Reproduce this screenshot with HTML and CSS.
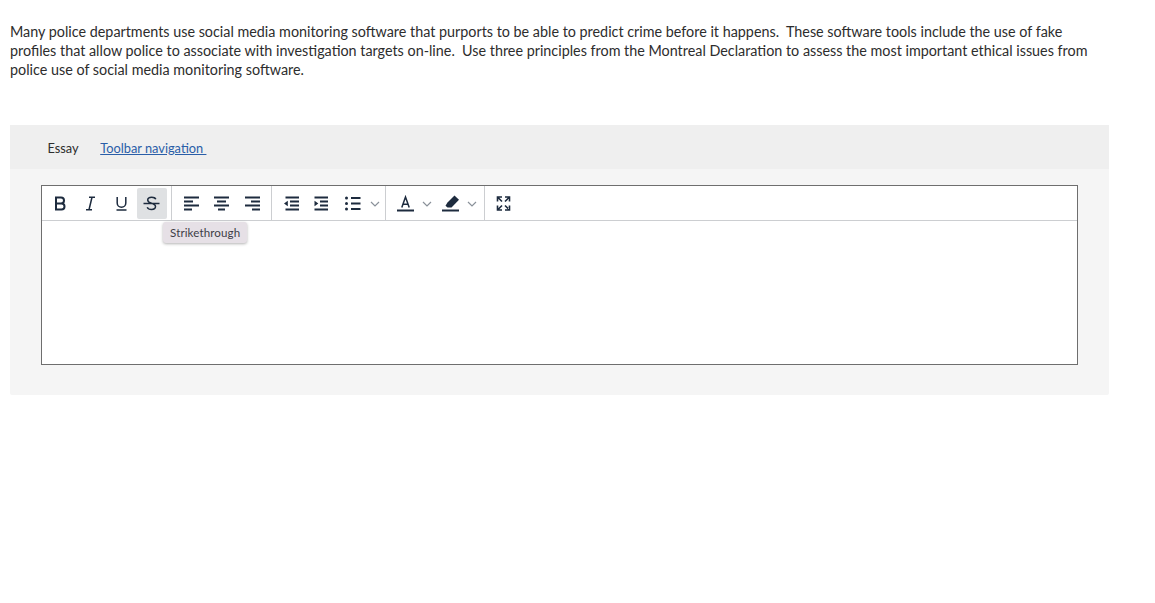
FILE: index.html
```html
<!DOCTYPE html>
<html lang="en">
<head>
<meta charset="utf-8">
<title>Essay</title>
<link rel="stylesheet" href="styles.css">
</head>
<body>
<p class="prompt">Many police departments use social media monitoring software that purports to be able to predict crime before it happens.&nbsp; These software tools include the use of fake profiles that allow police to associate with investigation targets on-line.&nbsp; Use three principles from the Montreal Declaration to assess the most important ethical issues from police use of social media monitoring software.</p>
<section class="card">
  <header class="card-head">
    <span class="label">Essay</span>
    <a class="nav-link" href="#">Toolbar navigation </a>
  </header>
  <div class="card-body">
    <div class="editor">
      <div class="toolbar">
        <div class="group group-text">
          <button class="tool"><svg viewBox="0 0 17 17" class="ico"><path d="M4 2.500h5a3 3 0 0 1 0 6H4zM4 8.500h5.500a3 3 0 0 1 0 6H4z" class="s2"/></svg></button>
          <button class="tool"><svg viewBox="0 0 17 17" class="ico"><path d="M7 2.300h6M4 14.700h6M10 2.300 7 14.700" class="s15"/></svg></button>
          <button class="tool"><svg viewBox="0 0 17 17" class="ico"><path d="M4.200 2v6a4.300 4.300 0 0 0 8.600 0V2M3.500 15h10" class="s15"/></svg></button>
          <button class="tool active"><svg viewBox="0 0 17 17" class="ico"><path d="M12.800 4.200C12.200 2.900 10.600 2.200 8.700 2.200c-2.200 0-4 1-4 2.900 0 1.500 1.300 2.500 3.800 3.200 2.500.7 4 1.600 4 3.300 0 1.900-1.800 2.900-4 2.900-2 0-3.600-.8-4.300-2.300M.5 8.500h16" class="s15"/></svg></button>
        </div>
        <div class="group group-align">
          <button class="tool"><svg viewBox="0 0 17 17" class="ico"><path d="M1 2.500h15M1 6.500h9M1 10.500h15M1 14.500h8" class="s18"/></svg></button>
          <button class="tool"><svg viewBox="0 0 17 17" class="ico"><path d="M1 2.500h15M4 6.500h9M1 10.500h15M5 14.500h7" class="s18"/></svg></button>
          <button class="tool"><svg viewBox="0 0 17 17" class="ico"><path d="M1 2.500h15M7 6.500h9M1 10.500h15M8 14.500h8" class="s18"/></svg></button>
        </div>
        <div class="group group-list">
          <button class="tool"><svg viewBox="0 0 17 17" class="ico"><path d="M2.500 2.500H16M7 6.500h9M7 10.500h9M2.500 14.500H16" class="s18"/><path d="M4.800 5.800 1 8.500l3.800 2.700z" class="fill"/></svg></button>
          <button class="tool"><svg viewBox="0 0 17 17" class="ico"><path d="M1.500 2.500H15M1.500 14.500H15M7 6.500h8M7 10.500h8" class="s18"/><path d="M1.500 5.800 5.300 8.500l-3.800 2.700z" class="fill"/></svg></button>
          <button class="tool"><svg viewBox="0 0 17 17" class="ico"><circle cx="2.500" cy="3" r="1.500" class="fill"/><circle cx="2.500" cy="8.500" r="1.500" class="fill"/><circle cx="2.500" cy="14" r="1.500" class="fill"/><path d="M7 3h9.500M7 8.500h9.500M7 14h9.500" class="s18"/></svg></button>
          <svg viewBox="0 0 10 6" class="chev"><path d="M1 1l4 4 4-4"/></svg>
        </div>
        <div class="group group-color">
          <button class="tool"><svg viewBox="0 0 17 17" class="ico"><path d="M4.800 12.500 8.500 2l3.700 10.500M6 9.300h5" class="s15"/><path d="M0 15.500h17" class="s2"/></svg></button>
          <svg viewBox="0 0 10 6" class="chev"><path d="M1 1l4 4 4-4"/></svg>
          <button class="tool tool-pen"><svg viewBox="0 0 17 17" class="ico"><path d="M12.500.5 17 4.800 9.500 12.500H5.500L3.500 10.800 5.500 7.500z" class="fill"/><path d="M0 15.500h17" class="s2"/></svg></button>
          <svg viewBox="0 0 10 6" class="chev"><path d="M1 1l4 4 4-4"/></svg>
        </div>
        <div class="group group-full">
          <button class="tool"><svg viewBox="0 0 17 17" class="ico"><path d="M2.500 6.500V2h4.500M2.500 2l4.500 4.500M14.500 6.500V2H10M14.500 2 10 6.500M2.500 10.500V15H7M2.500 15 7 10.500M14.500 10.500V15H10M14.500 15 10 10.500" class="s16"/></svg></button>
        </div>
        <div class="tooltip">Strikethrough</div>
      </div>
      <div class="editor-area"></div>
    </div>
  </div>
</section>
</body>
</html>
```
FILE: styles.css
```css
* { box-sizing: border-box; }
html, body { margin: 0; padding: 0; background: #fff; }
body {
  padding: 22px 46px 0 10px;
  font-family: Lato, "Open Sans", "Liberation Sans", sans-serif;
  color: #2d2d2d;
}
.prompt {
  margin: 0 0 46px;
  font-size: 14.35px;
  line-height: 19px;
  max-width: 1090px;
}
.card { width: 1099px; background: #f5f5f5; border-radius: 2px; padding-bottom: 30px; }
.card-head {
  height: 44px;
  background: #efefef;
  display: flex;
  align-items: center;
  padding: 1px 0 0 37.500px;
  gap: 21.500px;
  font-size: 12.800px;
}
.label { color: #2d2d2d; }
.nav-link { color: #2a5ea8; text-decoration: underline; white-space: pre; }
.card-body { padding: 16px 31px 0; }
.editor { border: 1px solid #6e6e6e; background: #fff; height: 180px; }
.toolbar {
  position: relative;
  height: 35px;
  display: flex;
  border-bottom: 1px solid #ccced1;
}
.group {
  display: flex;
  align-items: center;
  height: 100%;
  border-right: 1px solid #ccced1;
  padding-top: 1px;
}
.group-text { width: 130px; padding-left: 3px; }
.group-align { width: 100px; padding-left: 4px; }
.group-list { width: 114px; padding-left: 4px; }
.group-color { width: 99px; padding-left: 7px; }
.group-full { border-right: 0; padding-left: 6.500px; }
.tool {
  width: 30.500px;
  height: 31px;
  margin: 0;
  padding: 0;
  border: 0;
  border-radius: 2px;
  background: transparent;
  display: flex;
  align-items: center;
  justify-content: center;
}
.group-color .tool, .group-full .tool { width: 24px; }
.group-color .tool-pen { margin-left: 6px; }
.active { background: #dfe1e3; }
.ico { width: 17px; height: 17px; display: block; }
.s15, .s16, .s18, .s2 { fill: none; stroke: #1d2b3e; }
.s15 { stroke-width: 1.500; }
.s16 { stroke-width: 1.600; }
.s18 { stroke-width: 1.800; }
.s2 { stroke-width: 2; }
.fill { fill: #1d2b3e; }
.chev { width: 10px; height: 6px; fill: none; stroke: #8a919a; stroke-width: 1.200; margin-left: 2px; }
.group-color .chev { margin-left: 5px; }
.tooltip {
  position: absolute;
  left: 121px;
  top: 36px;
  height: 21px;
  padding: 0 7px 1px;
  display: flex;
  align-items: center;
  background: #e6e0e6;
  border-radius: 3px;
  box-shadow: 0 1px 3px rgba(0,0,0,.3);
  font-size: 11.600px;
  letter-spacing: .1px;
  color: #3e3e46;
}
```
